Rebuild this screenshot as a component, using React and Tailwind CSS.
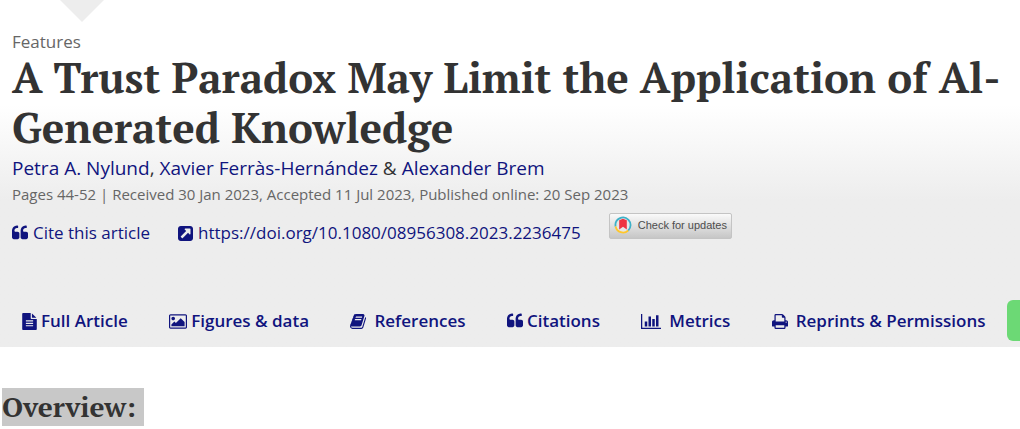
import clsx from 'clsx';

const ICONS = {
  quote: {
    box: '64 128 1664 1536',
    size: 'w-4 h-4',
    d: 'M832 960v384q0 80-56 136t-136 56h-384q-80 0-136-56t-56-136v-704q0-104 40.5-198.5t109.5-163.5 163.5-109.5 198.5-40.5h64q26 0 45 19t19 45v128q0 26-19 45t-45 19h-64q-106 0-181 75t-75 181v32q0 40 28 68t68 28h224q80 0 136 56t56 136zm896 0v384q0 80-56 136t-136 56h-384q-80 0-136-56t-56-136v-704q0-104 40.5-198.5t109.5-163.5 163.5-109.5 198.5-40.5h64q26 0 45 19t19 45v128q0 26-19 45t-45 19h-64q-106 0-181 75t-75 181v32q0 40 28 68t68 28h224q80 0 136 56t56 136z',
  },
  external: {
    box: '128 128 1536 1536',
    size: 'w-[15px] h-[15px]',
    d: 'M1408 928v-480q0-26-19-45t-45-19h-480q-42 0-59 39-17 41 14 70l144 144-534 534q-19 19-19 45t19 45l102 102q19 19 45 19t45-19l534-534 144 144q18 19 45 19 12 0 25-5 39-17 39-59zm256-512v960q0 119-84.5 203.5t-203.5 84.5h-960q-119 0-203.5-84.5t-84.5-203.5v-960q0-119 84.5-203.5t203.5-84.5h960q119 0 203.5 84.5t84.5 203.5z',
  },
  file: {
    box: '128 0 1536 1792',
    size: 'w-[15px] h-[17px]',
    d: 'M1596 476q14 14 28 36h-472v-472q22 14 36 28zm-476 164h544v1056q0 40-28 68t-68 28h-1344q-40 0-68-28t-28-68v-1600q0-40 28-68t68-28h800v544q0 40 28 68t68 28zm160 736v-64q0-14-9-23t-23-9h-704q-14 0-23 9t-9 23v64q0 14 9 23t23 9h704q14 0 23-9t9-23zm0-256v-64q0-14-9-23t-23-9h-704q-14 0-23 9t-9 23v64q0 14 9 23t23 9h704q14 0 23-9t9-23zm0-256v-64q0-14-9-23t-23-9h-704q-14 0-23 9t-9 23v64q0 14 9 23t23 9h704q14 0 23-9t9-23z',
  },
  image: {
    box: '-64 128 1920 1536',
    size: 'w-[18px] h-[15px]',
    d: 'M576 576q0 80-56 136t-136 56-136-56-56-136 56-136 136-56 136 56 56 136zm1024 384v448h-1408v-192l320-320 160 160 512-512zm96-704h-1600q-13 0-22.5 9.5t-9.5 22.5v1216q0 13 9.5 22.5t22.5 9.5h1600q13 0 22.5-9.5t9.5-22.5v-1216q0-13-9.5-22.5t-22.5-9.5zm160 32v1216q0 66-47 113t-113 47h-1600q-66 0-113-47t-47-113v-1216q0-66 47-113t113-47h1600q66 0 113 47t47 113z',
  },
  book: {
    box: '64 128 1664 1536',
    size: 'w-4 h-[15px]',
    d: 'M1703 478q40 57 18 129l-275 906q-19 64-76.5 107.5t-122.5 43.5h-923q-77 0-148.5-53.5t-99.5-131.5q-24-67-2-127 0-4 3-27t4-37q1-8-3-21.5t-3-19.5q2-11 8-21t16.5-23.5 16.5-23.5q23-38 45-91.5t30-91.5q3-10 .5-30t-.5-28q3-11 17-28t17-23q21-36 42-92t25-90q1-9-2.5-32t.5-28q4-13 22-30.5t22-22.5q19-26 42.5-84.5t27.5-96.5q1-8-3-25.5t-2-26.5q2-8 9-18t18-23 17-21q8-12 16.5-30.5t15-35 16-36 19.5-32 26.5-23.5 36-11.5 47.5 5.5l-1 3q38-9 51-9h761q74 0 114 56t18 130l-274 906q-36 119-71.5 153.5t-128.5 34.5h-869q-27 0-38 15-11 16-1 43 24 70 144 70h923q29 0 56-15.5t35-41.5l300-987q7-22 5-57 38 15 59 43zm-1064 2q-4 13 2 22.5t20 9.5h608q13 0 25.5-9.5t16.5-22.5l21-64q4-13-2-22.5t-20-9.5h-608q-13 0-25.5 9.5t-16.5 22.5zm-83 256q-4 13 2 22.5t20 9.5h608q13 0 25.5-9.5t16.5-22.5l21-64q4-13-2-22.5t-20-9.5h-608q-13 0-25.5 9.5t-16.5 22.5z',
  },
  chart: {
    box: '0 128 2048 1536',
    size: 'w-5 h-[15px]',
    d: 'M640 896v512h-256v-512h256zm384-512v1024h-256v-1024h256zm1024 1152v128h-2048v-1536h128v1408h1920zm-640-896v768h-256v-768h256zm384-384v1152h-256v-1152h256z',
  },
  print: {
    box: '64 128 1664 1536',
    size: 'w-4 h-[15px]',
    d: 'M448 1536h896v-256h-896v256zm0-640h896v-384h-160q-40 0-68-28t-28-68v-160h-640v640zm1152 64q0-26-19-45t-45-19-45 19-19 45 19 45 45 19 45-19 19-45zm128 0v416q0 13-9.5 22.5t-22.5 9.5h-224v160q0 40-28 68t-68 28h-960q-40 0-68-28t-28-68v-160h-224q-13 0-22.5-9.5t-9.5-22.5v-416q0-79 56.5-135.5t135.5-56.5h64v-544q0-40 28-68t68-28h672q40 0 88 20t76 48l152 152q28 28 48 76t20 88v256h64q79 0 135.5 56.5t56.5 135.5z',
  },
};

const TABS = [
  { label: 'Full Article', icon: 'file', gap: 'gap-1' },
  { label: 'Figures & data', icon: 'image', gap: 'gap-1' },
  { label: 'References', icon: 'book', gap: 'gap-2' },
  { label: 'Citations', icon: 'quote', gap: 'gap-1' },
  { label: 'Metrics', icon: 'chart', gap: 'gap-2' },
  { label: 'Reprints & Permissions', icon: 'print', gap: 'gap-2' },
];

const Icon = ({ name }) => {
  const { box, size, d } = ICONS[name];
  return (
    <svg viewBox={box} className={clsx('shrink-0', size)} fill="currentColor" aria-hidden="true">
      <path d={d} />
    </svg>
  );
};

const CrossmarkButton = () => (
  <button
    type="button"
    className="flex h-[26px] items-center gap-1.5 rounded-xs border border-[#c4c4c4] bg-linear-to-b from-[#fafafa] to-[#c6c6c6] px-1 pb-0.5 font-['Liberation_Sans',sans-serif] text-[11px] text-[#4d4d4d]"
  >
    <svg viewBox="0 0 18 18" className="h-[18px] w-[18px]" aria-hidden="true">
      <circle cx="9" cy="9" r="7.5" fill="#e6e6e6" />
      <path d="M1.6 10.5A7.6 7.6 0 0 1 14.5 3.8 7.6 7.6 0 0 1 14.2 14.5" fill="none" stroke="#3eb1c8" strokeWidth="1.8" />
      <path d="M1.6 10.5A7.6 7.6 0 0 0 14.2 14.5" fill="none" stroke="#ffc72c" strokeWidth="1.8" />
      <path d="M5.2 4.2 9 2.8l3.8 1.4v9.2L9 10.8l-3.8 2.6z" fill="#ef3340" />
    </svg>
    Check for updates
  </button>
);

const ArticleHeader = () => (
  <header className="bg-linear-to-b from-white from-[105px] to-[#ededed] to-[200px]">
    <svg viewBox="0 0 44 22" className="ml-[60px] h-[22px] w-11" aria-hidden="true">
      <path d="M0 0h44L22 22z" fill="#ededed" />
    </svg>

    <div className="px-3 pt-2.5 text-[17px] leading-6 text-[#666]">
      <p className="leading-5">Features</p>
      <h1 className="mb-0.5 font-['PT_Serif',serif] text-[42px] leading-[50px] font-bold text-[#333]">
        A Trust Paradox May Limit the Application of Al-Generated Knowledge
      </h1>
      <p className="text-[19px] leading-7 text-[#333]">
        <a href="#nylund" className="text-[#10147e]">Petra A. Nylund</a>,{' '}
        <a href="#ferras" className="text-[#10147e]">Xavier Ferràs-Hernández</a> &{' '}
        <a href="#brem" className="text-[#10147e]">Alexander Brem</a>
      </p>
      <p className="text-[15px]">
        Pages 44-52 | Received 30 Jan 2023, Accepted 11 Jul 2023, Published online: 20 Sep 2023
      </p>
      <div className="flex items-start pt-[7px] text-[#10147e]">
        <a href="#cite" className="mt-2 mr-7 flex items-center gap-[5px]">
          <Icon name="quote" />
          Cite this article
        </a>
        <a href="https://doi.org/10.1080/08956308.2023.2236475" className="mt-2 mr-7 flex items-center gap-[5px]">
          <Icon name="external" />
          https://doi.org/10.1080/08956308.2023.2236475
        </a>
        <CrossmarkButton />
      </div>
    </div>

    <nav className="mt-[55px] flex items-start justify-between overflow-hidden pb-[5px] pl-[22px]">
      {TABS.map((tab) => (
        <a
          key={tab.label}
          href="#tab"
          className={clsx('flex items-center text-[17px] leading-[42px] font-semibold whitespace-nowrap text-[#10147e]', tab.gap)}
        >
          <Icon name={tab.icon} />
          {tab.label}
        </a>
      ))}
      <button type="button" aria-label="PDF" className="-ml-5 h-[41px] w-[13px] rounded-l-md bg-[#6cd975]" />
    </nav>
  </header>
);

const App = () => (
  <div className="min-h-screen bg-white font-['Open_Sans',sans-serif]">
    <ArticleHeader />
    <main className="px-0.5 pt-[41px]">
      <h2 className="w-fit bg-[#c8c8c8] pr-2 font-['PT_Serif',serif] text-[28px] leading-[38px] font-bold text-[#333]">
        Overview:
      </h2>
    </main>
  </div>
);

export default App;
